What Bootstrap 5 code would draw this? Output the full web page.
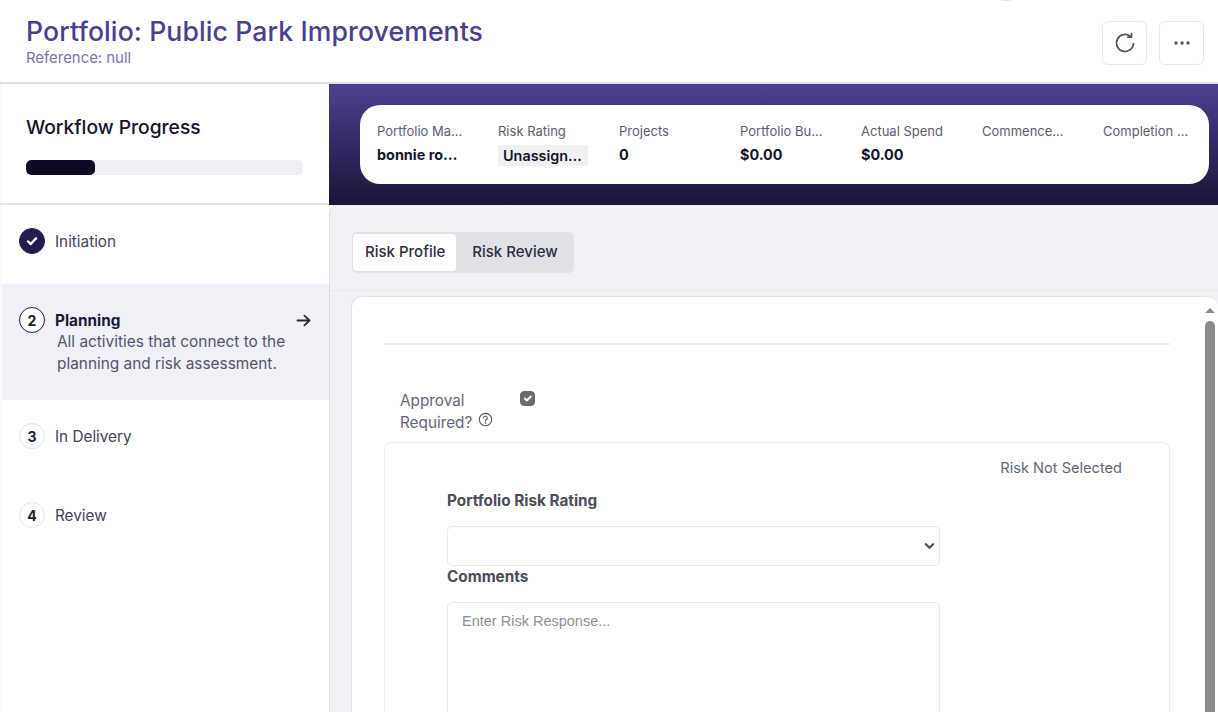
<!DOCTYPE html>
<html lang="en">
<head>
<meta charset="utf-8">
<title>Portfolio: Public Park Improvements</title>
<link rel="stylesheet" href="https://cdn.jsdelivr.net/npm/bootstrap@5.3.0/dist/css/bootstrap.min.css">
<style>
html,body{height:712px;overflow:hidden}
body{font-family:Inter,"Open Sans",sans-serif;background:#fff;color:#44445a}
.page-head{height:84px;border-bottom:2px solid #e2e2e4;padding:0 14px 0 26px;position:relative}
.page-title{font-size:26.6px;line-height:30px;font-weight:500;color:#4b3f92;margin:16px 0 0;letter-spacing:.1px}
.page-ref{font-size:14.9px;line-height:20px;color:#7d74b4;margin-top:2px}
.head-btn{width:45px;height:44px;padding:0;border:1px solid #e8e8ee;border-radius:6px;background:#fff;color:#55556a;display:flex;align-items:center;justify-content:center}
.head-tools{padding-top:21px}
.top-arc{position:absolute;left:995px;top:-10px;width:22px;height:11px;border-radius:50%;background:#e6e6e8}
.body-row{height:628px}
.side{width:329px;flex:none;background:linear-gradient(90deg,#f6f6f6 0,#fff 2px)}
.wf-box{height:121px;border-bottom:2px solid #e6e6ea;padding:30px 26px 0}
.wf-title{font-size:19.2px;line-height:26px;font-weight:500;color:#15132b;margin:0}
.wf-bar{height:15px;margin-top:20px;background:#eeeff5;border-radius:5px}
.wf-fill{background:#0f0b24;border-radius:5px;width:69px}
.step{display:flex;gap:10px;padding:0 0 0 19px}
.step-dot{width:26px;height:26px;flex:none;border-radius:50%;border:1px solid #e4e4e8;background:#fff;display:flex;align-items:center;justify-content:center;font-size:14px;font-weight:700;color:#22222e}
.step-dot.is-done{background:#221c50;border-color:#221c50}
.step-dot.is-now{border:1.5px solid #221c50}
.step-name{font-size:15.3px;line-height:28px;color:#44445a}
.step-first{height:79px;padding-top:23px}
.step-now{height:116px;padding-top:23px;padding-right:18px;background:#f0f1f7;margin-left:2px;padding-left:17px}
.step-now .step-name{font-weight:700;color:#1c1a36}
.step-arrow{margin-bottom:2px}
.step-desc{font-size:15.4px;line-height:22px;color:#55556a;margin:-4px 0 0 2px;white-space:nowrap}
.step-third{height:79px;padding-top:23px}
.step-fourth{height:79px;padding-top:23px}
.main-col{flex:1 1 0;min-width:0;background:#fff}
.main-lower{height:507px;background:#f0f1f7;border-left:1px solid #dcdce2;border-top-left-radius:8px;overflow:hidden}
.banner{height:121px;padding:21px 9px 0 31px;background:linear-gradient(180deg,#4c4090 0,#1a1438 100%)}
.sum-card{height:79px;background:#fff;border-radius:20px;padding:17px 0 0 17px;display:flex}
.sum-item{width:121px;flex:none;padding-right:33px}
.sum-label,.sum-value{white-space:nowrap;overflow:hidden;text-overflow:ellipsis}
.sum-label{font-size:13px;line-height:18px;color:#5c5c70}
.sum-value{font-size:14.4px;line-height:20px;font-weight:700;color:#15132b;margin-top:5px}
.sum-short{max-width:84px}
.sum-chip{display:inline-block;width:90px;background:#f1f1f3;padding:0 5px;font-weight:600;line-height:21px;vertical-align:top;overflow:hidden;text-overflow:ellipsis}
.sum-wide{overflow:visible}
.tab-wrap{height:86px;border-bottom:1px solid #e8e9ef;padding:27px 0 0 22px}
.tab-set{display:inline-flex;background:#e1e2e8;border-radius:5px;padding:2px 2px 2px 1px}
.tab-btn{height:37px;border:0;border-radius:4px;background:transparent;font-size:15px;font-weight:500;color:#2e2e3e;padding:0 14px 2px 16px;line-height:35px}
.tab-btn.is-on{background:#fff;padding:0 11px 2px 12px}
.form-card{margin:5px 0 0 21px;height:420px;background:#fff;border:1px solid #e3e3e9;border-right:0;border-bottom:0;border-radius:11px 11px 0 0;display:flex;overflow:hidden}
.form-body{flex:1 1 0;min-width:0;padding:46px 35px 0 32px}
.form-rule{height:2px;background:#eeeef0}
.approve-row{display:flex;margin-top:45px;padding-left:16px}
.approve-text{width:120px;font-size:15.3px;line-height:22px;color:#66667a}
.approve-help{vertical-align:1px;margin-left:1px}
.approve-check{width:15px;height:15px;margin:1px 0 0;border-radius:2px;background-color:#6b6b6b;border-color:#6b6b6b;opacity:1}
.approve-check:checked{background-color:#6b6b6b;border-color:#6b6b6b}
.risk-card{height:300px;margin-top:8px;border:1px solid #eeeef2;border-bottom:0;border-radius:7px 7px 0 0;padding:14px 47px 0 62px}
.risk-state{font-size:14.6px;line-height:22px;color:#66667a;text-align:right}
.risk-label{display:block;margin:0;font-size:15.3px;font-weight:700;line-height:22px;color:#4c4c58}
.risk-first{margin-top:11px}
.risk-select{width:493px;height:40px;margin-top:14px;border:1px solid #e9e9ee;border-radius:5px;box-shadow:none;background-image:url("data:image/svg+xml,%3csvg xmlns='http://www.w3.org/2000/svg' viewBox='0 0 12 8'%3e%3cpath fill='none' stroke='%234c4c58' stroke-width='2.4' stroke-linecap='round' stroke-linejoin='round' d='M2 2l4 4 4-4'/%3e%3c/svg%3e");background-size:11px 8px;background-position:right 4px center}
.risk-text{width:493px;height:200px;margin-top:14px;border:1px solid #e9e9ee;border-radius:5px;font-family:"Liberation Sans",Arial,sans-serif;font-size:14.5px;padding:8px 14px;resize:none}
.risk-text::placeholder{color:#8d8f96;opacity:1}
.risk-second{margin-top:0}
.scroll-col{width:13px;flex:none;padding:11px 3px 0 0;background:#fff}
.scroll-up{width:0;height:0;margin:0 auto;border-left:5px solid transparent;border-right:5px solid transparent;border-bottom:5px solid #8c8c8c}
.scroll-thumb{width:10px;height:500px;margin:8px auto 0;background:#8c8c8c;border-radius:5px}
</style>
</head>
<body>
<header class="page-head d-flex justify-content-between">
  <div>
    <h1 class="page-title">Portfolio: Public Park Improvements</h1>
    <div class="page-ref">Reference: null</div>
  </div>
  <span class="top-arc"></span>
  <div class="head-tools d-flex gap-2">
    <button class="btn head-btn me-1" aria-label="Refresh">
      <svg width="24" height="24" viewBox="0 0 24 24" fill="none" stroke="#55556a" stroke-width="1.7" stroke-linecap="round"><path d="M20.5 12.5a8.5 8.5 0 1 1-3-7"/><path d="M18.5 2.6v3.6h-3.6" stroke-linejoin="round"/></svg>
    </button>
    <button class="btn head-btn" aria-label="More">
      <svg width="18" height="6" viewBox="0 0 18 6" fill="#55556a"><circle cx="3" cy="3" r="1.7"/><circle cx="9" cy="3" r="1.7"/><circle cx="15" cy="3" r="1.7"/></svg>
    </button>
  </div>
</header>
<div class="body-row d-flex">
  <aside class="side">
    <div class="wf-box">
      <h2 class="wf-title">Workflow Progress</h2>
      <div class="progress wf-bar"><div class="progress-bar wf-fill"></div></div>
    </div>
    <div class="step step-first">
      <span class="step-dot is-done"><svg width="14" height="14" viewBox="0 0 14 14" fill="none" stroke="#fff" stroke-width="2.4" stroke-linecap="round" stroke-linejoin="round"><path d="M3 7.4l2.8 2.6L11 4.4"/></svg></span>
      <span class="step-name">Initiation</span>
    </div>
    <div class="step step-now">
      <span class="step-dot is-now">2</span>
      <div class="flex-grow-1">
        <div class="d-flex justify-content-between align-items-center">
          <span class="step-name">Planning</span>
          <svg class="step-arrow" width="15" height="13" viewBox="0 0 16 14" fill="none" stroke="#2b2b33" stroke-width="2" stroke-linecap="round" stroke-linejoin="round"><path d="M1.5 7h13M9 1.8L14.5 7 9 12.2"/></svg>
        </div>
        <p class="step-desc">All activities that connect to the<br>planning and risk assessment.</p>
      </div>
    </div>
    <div class="step step-third">
      <span class="step-dot">3</span>
      <span class="step-name">In Delivery</span>
    </div>
    <div class="step step-fourth">
      <span class="step-dot">4</span>
      <span class="step-name">Review</span>
    </div>
  </aside>
  <main class="main-col">
    <section class="banner">
      <div class="sum-card">
        <div class="sum-item"><div class="sum-label">Portfolio Manager</div><div class="sum-value sum-short">bonnie rogers</div></div>
        <div class="sum-item"><div class="sum-label">Risk Rating</div><div class="sum-value sum-wide"><span class="sum-chip">Unassigned</span></div></div>
        <div class="sum-item"><div class="sum-label">Projects</div><div class="sum-value">0</div></div>
        <div class="sum-item"><div class="sum-label">Portfolio Budget</div><div class="sum-value">$0.00</div></div>
        <div class="sum-item"><div class="sum-label">Actual Spend</div><div class="sum-value">$0.00</div></div>
        <div class="sum-item"><div class="sum-label">Commencement</div></div>
        <div class="sum-item"><div class="sum-label">Completion Date</div></div>
      </div>
    </section>
    <div class="main-lower">
      <div class="tab-wrap">
        <div class="tab-set">
          <button class="btn tab-btn is-on">Risk Profile</button>
          <button class="btn tab-btn">Risk Review</button>
        </div>
      </div>
      <div class="form-card">
        <div class="form-body">
          <div class="form-rule"></div>
          <div class="approve-row">
            <div class="approve-text">Approval<br>Required?
              <svg class="approve-help" width="15" height="15" viewBox="0 0 16 16" fill="none" stroke="#55556a" stroke-width="1.2" stroke-linecap="round"><circle cx="8" cy="8" r="6.6"/><path d="M6 6.3a2 2 0 1 1 3 1.8c-.7.4-1 .8-1 1.5"/><circle cx="8" cy="11.7" r=".35" fill="#55556a"/></svg>
            </div>
            <input class="form-check-input approve-check" type="checkbox" checked aria-label="Approval Required">
          </div>
          <div class="risk-card">
            <div class="risk-state">Risk Not Selected</div>
            <label class="risk-label risk-first" for="rr">Portfolio Risk Rating</label>
            <select class="form-select risk-select" id="rr"><option></option></select>
            <label class="risk-label risk-second" for="rc">Comments</label>
            <textarea class="form-control risk-text" id="rc" placeholder="Enter Risk Response..."></textarea>
          </div>
        </div>
        <div class="scroll-col">
          <div class="scroll-up"></div>
          <div class="scroll-thumb"></div>
        </div>
      </div>
    </div>
  </main>
</div>
<script src="https://cdn.jsdelivr.net/npm/bootstrap@5.3.0/dist/js/bootstrap.bundle.min.js"></script>
</body>
</html>
